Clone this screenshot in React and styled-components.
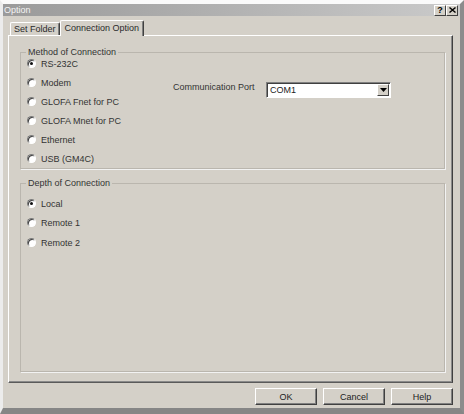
import React from "react";
import styled, { createGlobalStyle } from "styled-components";

const GlobalStyle = createGlobalStyle`
  html, body {
    margin: 0;
    padding: 0;
    background: #d4d0c8;
  }
  body {
    font-family: "Liberation Sans", Arial, sans-serif;
    font-size: 9px;
    color: #333;
  }
`;

const methods = [
    "RS-232C",
    "Modem",
    "GLOFA Fnet for PC",
    "GLOFA Mnet for PC",
    "Ethernet",
    "USB (GM4C)",
];

const depths = [
    { label: "Local", h: 19 },
    { label: "Remote 1", h: 19 },
    { label: "Remote 2", h: 21 },
];

function App() {
    return (
        <>
            <GlobalStyle />
            <Window>
                <TitleBar>
                    <Title>Option</Title>
                    <TitleButton>?</TitleButton>
                    <TitleButton>
                        <svg width="7" height="6" viewBox="0 0 7 6">
                            <path d="M0.5 0.5 L6.5 5.5 M6.5 0.5 L0.5 5.5" stroke="#000" strokeWidth="1.4" />
                        </svg>
                    </TitleButton>
                </TitleBar>
                <Content>
                    <Tabs>
                        <Tab>Set Folder</Tab>
                        <Tab $active>Connection Option</Tab>
                    </Tabs>
                    <Panel>
                        <Group $fixed>
                            <Legend>Method of Connection</Legend>
                            <GroupBody>
                                <RadioList>
                                    {methods.map((m, i) => (
                                        <RadioRow key={m} $h={19}>
                                            <RadioCircle $on={i === 0} />
                                            <span>{m}</span>
                                        </RadioRow>
                                    ))}
                                </RadioList>
                                <PortRow>
                                    <PortLabel>Communication Port</PortLabel>
                                    <Select>
                                        <SelectText>COM1</SelectText>
                                        <DropButton>
                                            <svg width="7" height="4" viewBox="0 0 7 4">
                                                <path d="M0 0 H7 L3.5 4 Z" fill="#000" />
                                            </svg>
                                        </DropButton>
                                    </Select>
                                </PortRow>
                            </GroupBody>
                        </Group>
                        <Group>
                            <Legend>Depth of Connection</Legend>
                            <DepthList>
                                {depths.map((d, i) => (
                                    <RadioRow key={d.label} $h={d.h}>
                                        <RadioCircle $on={i === 0} />
                                        <span>{d.label}</span>
                                    </RadioRow>
                                ))}
                            </DepthList>
                        </Group>
                    </Panel>
                    <Footer>
                        <Button>OK</Button>
                        <Button>Cancel</Button>
                        <Button>Help</Button>
                    </Footer>
                </Content>
            </Window>
        </>
    );
}

const Window = styled.div`
    box-sizing: border-box;
    width: 464px;
    height: 414px;
    display: flex;
    flex-direction: column;
    background: #d4d0c8;
    border-top: 4px solid #fafafa;
    border-left: 3px solid #ececec;
    border-right: 4px solid #8c8c8c;
    border-bottom: 6px solid #868686;
`;

const TitleBar = styled.div`
    height: 12px;
    display: flex;
    align-items: center;
    padding: 0 2px 0 1px;
    background: linear-gradient(to right, #9a9a9a, #cacaca);
`;

const Title = styled.div`
    flex: 1;
    color: #f4f4f4;
    line-height: 12px;
`;

const TitleButton = styled.div`
    box-sizing: border-box;
    width: 12px;
    height: 11px;
    display: flex;
    align-items: center;
    justify-content: center;
    background: #d4d0c8;
    border: 1px solid;
    border-color: #ffffff #404040 #404040 #ffffff;
    font-weight: bold;
    font-size: 9px;
    line-height: 9px;
    color: #000;
`;

const Content = styled.div`
    flex: 1;
    display: flex;
    flex-direction: column;
    padding: 0 7px 0 5px;
`;

const Tabs = styled.div`
    height: 19px;
    display: flex;
    align-items: flex-end;
    padding-left: 2px;
    position: relative;
    z-index: 1;
`;

const Tab = styled.div`
    box-sizing: border-box;
    height: ${(p) => (p.$active ? "16px" : "13px")};
    margin-bottom: ${(p) => (p.$active ? "-1px" : "0")};
    padding: ${(p) => (p.$active ? "2px 4px 0 4px" : "1px 3px 0 3px")};
    background: #d4d0c8;
    border-top: 1px solid #ffffff;
    border-left: 1px solid #ffffff;
    border-right: 1px solid #404040;
    border-radius: 2px 2px 0 0;
    box-shadow: inset -1px 0 0 #808080;
    line-height: 11px;
    font-size: 9px;
    color: #2a2a2a;
    white-space: nowrap;
`;

const Panel = styled.div`
    box-sizing: border-box;
    height: 348px;
    display: flex;
    flex-direction: column;
    gap: 14px;
    padding: 16px 7px 10px 11px;
    border-top: 1px solid #ffffff;
    border-left: 1px solid #ffffff;
    border-right: 1px solid #404040;
    border-bottom: 1px solid #5a5a5a;
    box-shadow: inset -1px -1px 0 #8a8a8a;
`;

const Group = styled.div`
    position: relative;
    box-sizing: border-box;
    ${(p) => (p.$fixed ? "height: 117px;" : "flex: 1;")}
    border: 1px solid #bab6ae;
    box-shadow: 1px 1px 0 #f2f2f2;
`;

const Legend = styled.div`
    position: absolute;
    top: -6px;
    left: 5px;
    padding: 0 2px;
    background: #d4d0c8;
    line-height: 11px;
    color: #333;
`;

const GroupBody = styled.div`
    display: flex;
    padding-top: 1px;
`;

const RadioList = styled.div`
    box-sizing: border-box;
    width: 152px;
    padding-left: 6px;
    display: flex;
    flex-direction: column;
`;

const DepthList = styled.div`
    padding: 10px 0 0 6px;
    display: flex;
    flex-direction: column;
`;

const RadioRow = styled.div`
    height: ${(p) => p.$h}px;
    display: flex;
    align-items: center;
    gap: 5px;
    color: #333;
    white-space: nowrap;
`;

const RadioCircle = styled.span`
    box-sizing: border-box;
    flex: none;
    width: 9px;
    height: 9px;
    border-radius: 50%;
    background: #ffffff;
    border: 1px solid;
    border-color: #7a7a7a #ffffff #ffffff #7a7a7a;
    box-shadow: inset 1px 1px 0 #404040;
    display: flex;
    align-items: center;
    justify-content: center;

    &::after {
        content: "";
        width: 3px;
        height: 3px;
        border-radius: 50%;
        background: ${(p) => (p.$on ? "#111" : "transparent")};
    }
`;

const PortRow = styled.div`
    display: flex;
    align-items: flex-start;
    margin-top: 28px;
`;

const PortLabel = styled.div`
    width: 93px;
    line-height: 11px;
    color: #333;
    white-space: nowrap;
`;

const Select = styled.div`
    box-sizing: border-box;
    width: 125px;
    height: 16px;
    display: flex;
    align-items: stretch;
    background: #ffffff;
    border: 1px solid;
    border-color: #808080 #ffffff #ffffff #808080;
    box-shadow: inset 1px 1px 0 #404040;
    padding: 1px;
`;

const SelectText = styled.div`
    flex: 1;
    padding-left: 2px;
    line-height: 12px;
    color: #222;
`;

const DropButton = styled.div`
    box-sizing: border-box;
    width: 12px;
    display: flex;
    align-items: center;
    justify-content: center;
    background: #d4d0c8;
    border: 1px solid;
    border-color: #ffffff #404040 #404040 #ffffff;
`;

const Footer = styled.div`
    flex: 1;
    display: flex;
    justify-content: flex-end;
    align-items: flex-start;
    gap: 6px;
    padding-top: 5px;
`;

const Button = styled.div`
    box-sizing: border-box;
    width: 62px;
    height: 17px;
    display: flex;
    align-items: center;
    justify-content: center;
    background: #d4d0c8;
    border: 1px solid;
    border-color: #ffffff #404040 #404040 #ffffff;
    box-shadow: inset -1px -1px 0 #808080;
    color: #222;
    font-size: 9px;
`;

export default App;
